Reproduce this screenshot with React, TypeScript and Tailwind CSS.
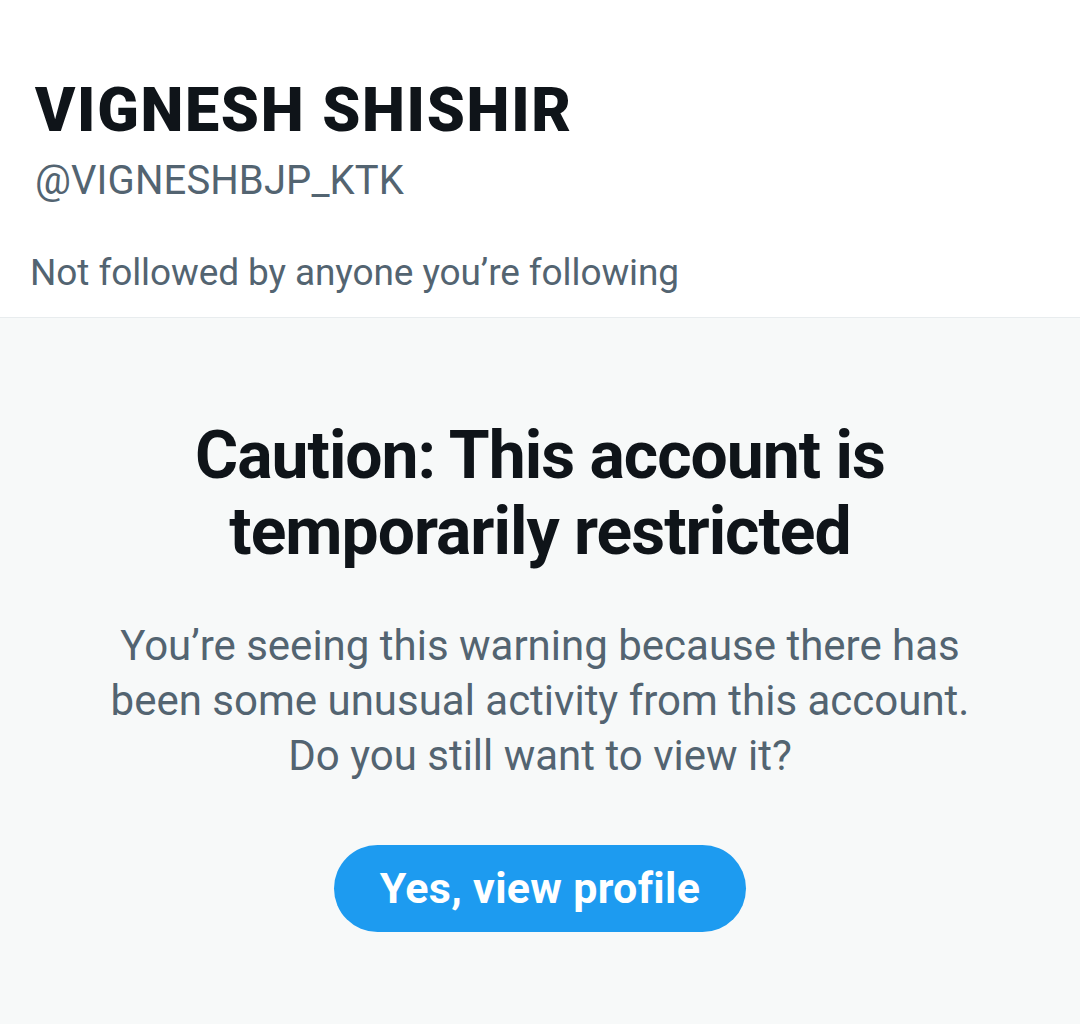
export default function App() {
  return (
    <div className="w-[1080px] h-[1024px] flex flex-col bg-white" style={{ fontFamily: "Roboto, 'Liberation Sans', sans-serif" }}>
      <div className="flex flex-col pl-[35px] pt-[72px] h-[318px] border-b border-[#e8ecee]">
        <div className="text-[61px] leading-[76px] font-black text-[#0f1419] tracking-[1.7px]">VIGNESH SHISHIR</div>
        <div className="text-[40px] leading-[48px] text-[#536471] mt-[9px] tracking-[0.1px]">@VIGNESHBJP_KTK</div>
        <div className="text-[37px] leading-[48px] text-[#536471] mt-[44px] -ml-[5px] tracking-[-0.1px]">Not followed by anyone you’re following</div>
      </div>
      <div className="flex-1 bg-[#f7f9f9] flex flex-col items-center pt-[100px]">
        <div className="text-[66px] leading-[76px] font-bold text-[#0f1419] text-center tracking-[-1px]">
          Caution: This account is<br />temporarily restricted
        </div>
        <div className="text-[42px] leading-[55px] text-[#536471] text-center mt-[48px]">
          You’re seeing this warning because there has<br />been some unusual activity from this account.<br />Do you still want to view it?
        </div>
        <button className="mt-[62px] w-[412px] h-[87px] rounded-full bg-[#1d9bf0] text-white text-[43px] font-bold tracking-[0.3px]">Yes, view profile</button>
      </div>
    </div>
  );
}
